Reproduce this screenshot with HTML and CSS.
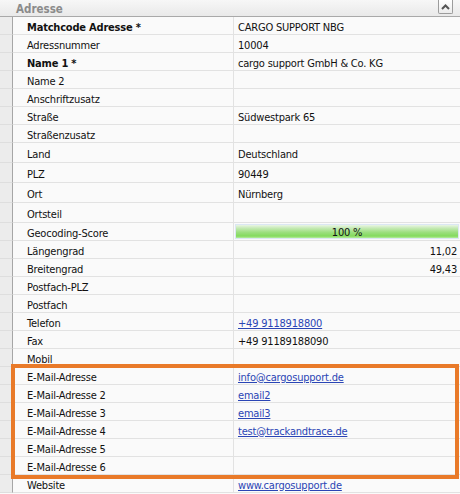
FILE: index.html
```html
<!DOCTYPE html>
<html lang="de">
<head>
<meta charset="utf-8">
<title>Adresse</title>
<link rel="stylesheet" href="styles.css">
</head>
<body>
<div class="panel">
  <div class="header">
    <span class="title">Adresse</span>
    <span class="collapse"><svg width="9" height="6" viewBox="0 0 9 6"><path d="M1 5 L4.5 1.5 L8 5" fill="none" stroke="#555" stroke-width="2"/></svg></span>
  </div>
  <div class="rows">
    <div class="row"><div class="g"></div><div class="l b">Matchcode Adresse *</div><div class="v">CARGO SUPPORT NBG</div></div>
    <div class="row"><div class="g"></div><div class="l">Adressnummer</div><div class="v">10004</div></div>
    <div class="row"><div class="g"></div><div class="l b">Name 1 *</div><div class="v">cargo support GmbH &amp; Co. KG</div></div>
    <div class="row"><div class="g"></div><div class="l">Name 2</div><div class="v"></div></div>
    <div class="row"><div class="g"></div><div class="l">Anschriftzusatz</div><div class="v"></div></div>
    <div class="row"><div class="g"></div><div class="l">Straße</div><div class="v">Südwestpark 65</div></div>
    <div class="row"><div class="g"></div><div class="l">Straßenzusatz</div><div class="v"></div></div>
    <div class="row tall"><div class="g"></div><div class="l">Land</div><div class="v">Deutschland</div></div>
    <div class="row tall"><div class="g"></div><div class="l">PLZ</div><div class="v">90449</div></div>
    <div class="row tall"><div class="g"></div><div class="l">Ort</div><div class="v">Nürnberg</div></div>
    <div class="row tall"><div class="g"></div><div class="l">Ortsteil</div><div class="v"></div></div>
    <div class="row"><div class="g"></div><div class="l">Geocoding-Score</div><div class="v bar-cell"><div class="bar">100 %</div></div></div>
    <div class="row"><div class="g"></div><div class="l">Längengrad</div><div class="v num">11,02</div></div>
    <div class="row"><div class="g"></div><div class="l">Breitengrad</div><div class="v num">49,43</div></div>
    <div class="row"><div class="g"></div><div class="l">Postfach-PLZ</div><div class="v"></div></div>
    <div class="row"><div class="g"></div><div class="l">Postfach</div><div class="v"></div></div>
    <div class="row"><div class="g"></div><div class="l">Telefon</div><div class="v"><a href="#">+49 9118918800</a></div></div>
    <div class="row"><div class="g"></div><div class="l">Fax</div><div class="v">+49 91189188090</div></div>
    <div class="row"><div class="g"></div><div class="l">Mobil</div><div class="v"></div></div>
    <div class="row"><div class="g"></div><div class="l">E-Mail-Adresse</div><div class="v"><a href="#">info@cargosupport.de</a></div></div>
    <div class="row"><div class="g"></div><div class="l">E-Mail-Adresse 2</div><div class="v"><a href="#">email2</a></div></div>
    <div class="row"><div class="g"></div><div class="l">E-Mail-Adresse 3</div><div class="v"><a href="#">email3</a></div></div>
    <div class="row"><div class="g"></div><div class="l">E-Mail-Adresse 4</div><div class="v"><a href="#">test@trackandtrace.de</a></div></div>
    <div class="row"><div class="g"></div><div class="l">E-Mail-Adresse 5</div><div class="v"></div></div>
    <div class="row"><div class="g"></div><div class="l">E-Mail-Adresse 6</div><div class="v"></div></div>
    <div class="row"><div class="g"></div><div class="l">Website</div><div class="v"><a href="#">www.cargosupport.de</a></div></div>
  </div>
  <div class="highlight"></div>
</div>
</body>
</html>
```
FILE: styles.css
```css
html, body {
  margin: 0;
  padding: 0;
  background: #fafafa;
}
body {
  font-family: "DejaVu Sans Condensed", "DejaVu Sans", sans-serif;
  font-stretch: condensed;
  font-size: 11px;
  letter-spacing: -0.2px;
  color: #111;
  width: 460px;
  height: 494px;
  overflow: hidden;
}
.panel {
  position: relative;
  width: 460px;
}
.header {
  height: 17px;
  box-sizing: border-box;
  border-bottom: 1px solid #a9a9a9;
  background: linear-gradient(#f7f7f7, #e9e9e9);
  display: flex;
  align-items: center;
  justify-content: space-between;
  padding: 1px 7px 0 16px;
}
.title {
  font-weight: bold;
  color: #8b8b8b;
  font-size: 11.5px;
  letter-spacing: 0;
}
.collapse {
  width: 15px;
  height: 14px;
  box-sizing: border-box;
  border: 1px solid #9c9c9c;
  border-top: none;
  border-radius: 0 0 2px 2px;
  background: linear-gradient(#ffffff, #ececec);
  display: flex;
  align-items: center;
  justify-content: center;
  align-self: flex-start;
  margin-top: -1px;
}
.row {
  display: grid;
  grid-template-columns: 13px 221px 1fr;
  height: 18px;
}
.row.tall {
  height: 20px;
}
.g {
  background: #ececec;
  border-right: 1px solid #a6a6a6;
  border-bottom: 1px solid #dedede;
}
.l, .v {
  display: flex;
  align-items: center;
  box-sizing: border-box;
  padding-top: 3px;
  border-bottom: 1px solid #e2e2e2;
  white-space: nowrap;
  overflow: hidden;
}
.l {
  padding-left: 14px;
  border-right: 1px solid #e2e2e2;
}
.v {
  padding-left: 4px;
}
.b {
  font-weight: bold;
}
.num {
  justify-content: flex-end;
  padding-right: 3px;
}
a {
  color: #2a45b5;
  text-decoration: underline;
}
.v.bar-cell {
  padding: 1px;
}
.bar {
  flex: 1;
  height: 100%;
  box-sizing: border-box;
  border: 1px solid #dbe7f3;
  background: linear-gradient(#e9f5e4 0%, #c4e9b3 25%, #9ddf80 55%, #83da5d 85%, #b5ec9c 100%);
  display: flex;
  align-items: center;
  justify-content: center;
  padding-top: 2px;
  color: #111;
}
.highlight {
  position: absolute;
  left: 11px;
  top: 364px;
  width: 448px;
  height: 115px;
  box-sizing: border-box;
  border: 4px solid #e97a29;
  pointer-events: none;
}
```
